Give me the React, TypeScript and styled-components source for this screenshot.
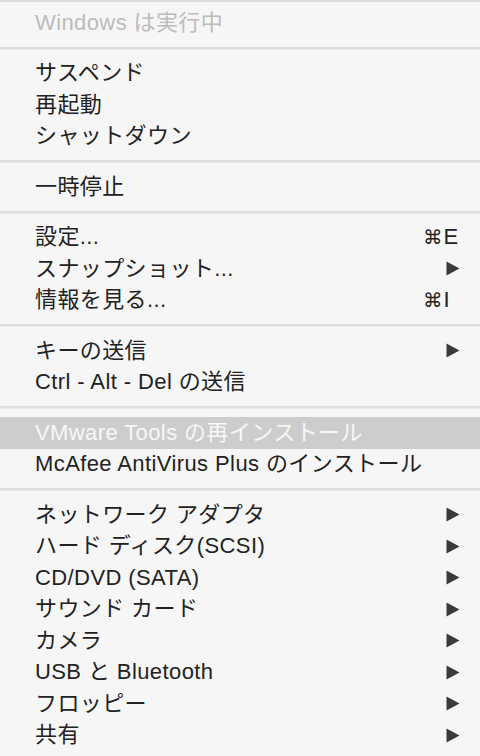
import React from 'react';
import styled, { createGlobalStyle } from 'styled-components';

type Item = {
  label: string;
  shortcut?: string;
  submenu?: boolean;
  disabled?: boolean;
  active?: boolean;
};

const sections: Item[][] = [
  [{ label: 'Windows は実行中', disabled: true }],
  [{ label: 'サスペンド' }, { label: '再起動' }, { label: 'シャットダウン' }],
  [{ label: '一時停止' }],
  [
    { label: '設定...', shortcut: 'E' },
    { label: 'スナップショット...', submenu: true },
    { label: '情報を見る...', shortcut: 'I' },
  ],
  [{ label: 'キーの送信', submenu: true }, { label: 'Ctrl - Alt - Del の送信' }],
  [
    { label: 'VMware Tools の再インストール', active: true },
    { label: 'McAfee AntiVirus Plus のインストール' },
  ],
  [
    { label: 'ネットワーク アダプタ', submenu: true },
    { label: 'ハード ディスク(SCSI)', submenu: true },
    { label: 'CD/DVD (SATA)', submenu: true },
    { label: 'サウンド カード', submenu: true },
    { label: 'カメラ', submenu: true },
    { label: 'USB と Bluetooth', submenu: true },
    { label: 'フロッピー', submenu: true },
    { label: '共有', submenu: true },
  ],
];

const GlobalStyle = createGlobalStyle`
  html, body {
    margin: 0;
    background: #f6f6f6;
  }
`;

const Menu = styled.div`
  min-height: 100vh;
  box-sizing: border-box;
  background: #f6f6f6;
  border-top: 2px solid #dcdcdc;
  padding-top: 5px;
  font-family: "Liberation Sans", "Noto Sans CJK JP", sans-serif;
  font-size: 22px;
  letter-spacing: 0.4px;
`;

const Row = styled.div<{ $disabled?: boolean; $active?: boolean }>`
  height: 31.5px;
  display: flex;
  align-items: center;
  padding: 0 20px 0 35px;
  line-height: 1;
  background: ${(p) => (p.$active ? '#cdcdcd' : 'transparent')};
  color: ${(p) => (p.$disabled ? '#bcbcbc' : p.$active ? '#f7f7f7' : '#222')};
`;

const Label = styled.span`
  flex: 1;
  white-space: nowrap;
`;

const Shortcut = styled.span`
  width: 33px;
  margin-right: 4px;
  color: #222;
  letter-spacing: 0;
  white-space: nowrap;
`;

const Cmd = styled.span`
  font-family: "DejaVu Sans", sans-serif;
  font-size: 19.5px;
  margin-right: 1px;
`;

const Separator = styled.div`
  height: 19px;
  box-sizing: border-box;
  padding-top: 8px;
  &::after {
    content: '';
    display: block;
    height: 2px;
    background: #dfdfdf;
    border-bottom: 1px solid #ebebeb;
  }
`;

const Arrow = () => (
  <svg width="14" height="15" viewBox="0 0 14 15">
    <path d="M0.5 0.5 L13.5 7.5 L0.5 14.5 Z" fill="#3a3a3a" />
  </svg>
);

const App = () => (
  <>
    <GlobalStyle />
    <Menu>
      {sections.map((items, i) => (
        <React.Fragment key={i}>
          {i > 0 && <Separator />}
          {items.map((item) => (
            <Row key={item.label} $disabled={item.disabled} $active={item.active}>
              <Label>{item.label}</Label>
              {item.shortcut && (
                <Shortcut>
                  <Cmd>⌘</Cmd>
                  {item.shortcut}
                </Shortcut>
              )}
              {item.submenu && <Arrow />}
            </Row>
          ))}
        </React.Fragment>
      ))}
    </Menu>
  </>
);

export default App;
